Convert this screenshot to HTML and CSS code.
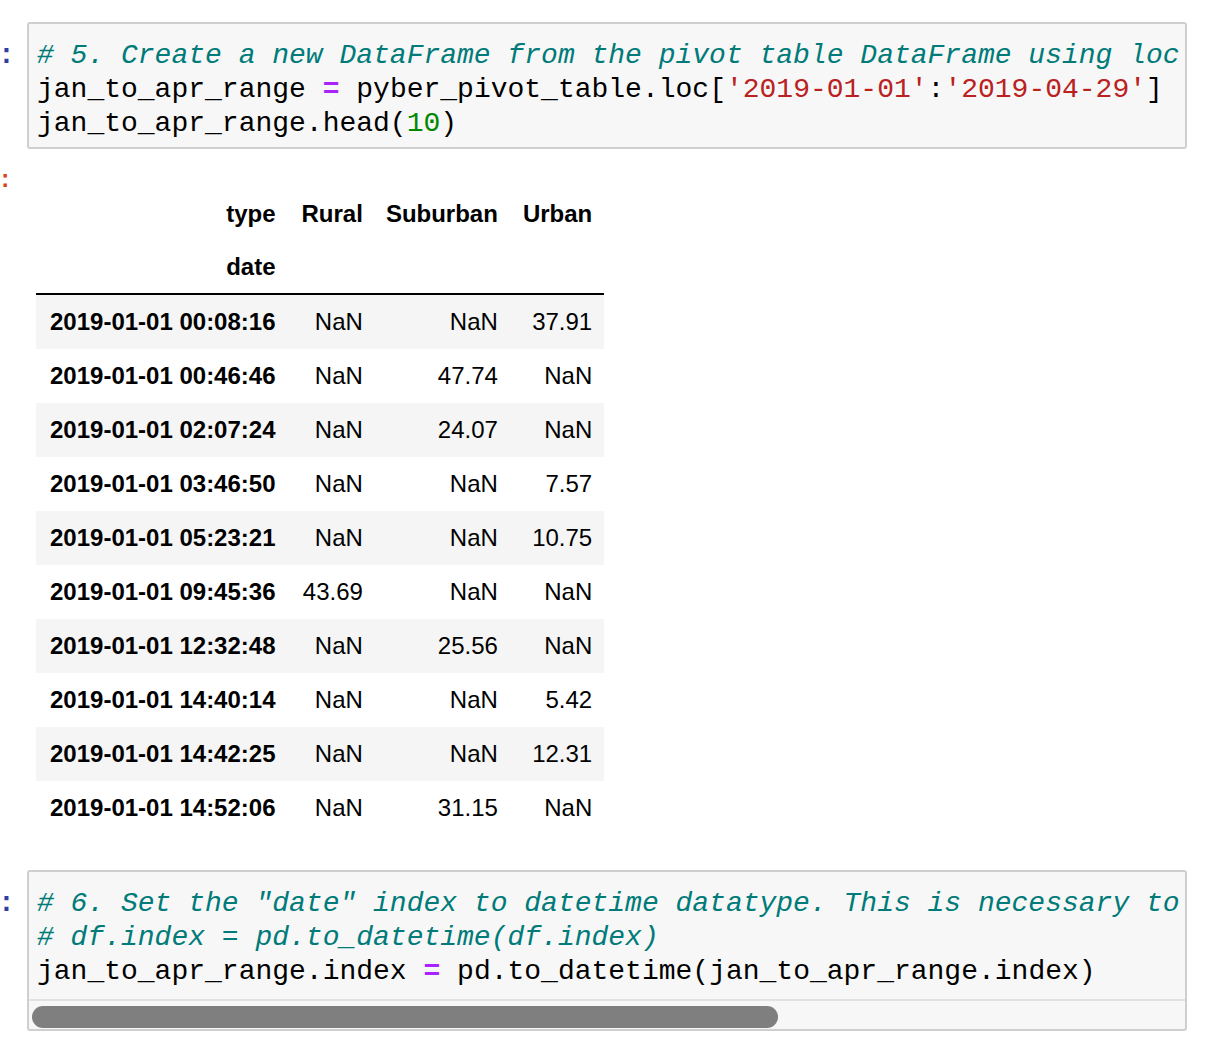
FILE: index.html
```html
<!DOCTYPE html>
<html lang="en">
<head>
<meta charset="utf-8">
<title>Notebook</title>
<link rel="stylesheet" href="styles.css">
</head>
<body>
<div class="nb">
  <div class="cell">
    <div class="prompt prompt-in">:</div>
    <div class="input-area">
<pre class="code"><span class="cm"># 5. Create a new DataFrame from the pivot table DataFrame using loc</span>
jan_to_apr_range <span class="op">=</span> pyber_pivot_table.loc[<span class="str">'2019-01-01'</span>:<span class="str">'2019-04-29'</span>]
jan_to_apr_range.head(<span class="num">10</span>)</pre>
    </div>
  </div>

  <div class="cell cell-out">
    <div class="prompt prompt-out">:</div>
    <div class="output-area">
      <table class="df">
        <thead>
          <tr><th>type</th><th>Rural</th><th>Suburban</th><th>Urban</th></tr>
          <tr class="names"><th>date</th><th></th><th></th><th></th></tr>
        </thead>
        <tbody>
          <tr><th>2019-01-01 00:08:16</th><td>NaN</td><td>NaN</td><td>37.91</td></tr>
          <tr><th>2019-01-01 00:46:46</th><td>NaN</td><td>47.74</td><td>NaN</td></tr>
          <tr><th>2019-01-01 02:07:24</th><td>NaN</td><td>24.07</td><td>NaN</td></tr>
          <tr><th>2019-01-01 03:46:50</th><td>NaN</td><td>NaN</td><td>7.57</td></tr>
          <tr><th>2019-01-01 05:23:21</th><td>NaN</td><td>NaN</td><td>10.75</td></tr>
          <tr><th>2019-01-01 09:45:36</th><td>43.69</td><td>NaN</td><td>NaN</td></tr>
          <tr><th>2019-01-01 12:32:48</th><td>NaN</td><td>25.56</td><td>NaN</td></tr>
          <tr><th>2019-01-01 14:40:14</th><td>NaN</td><td>NaN</td><td>5.42</td></tr>
          <tr><th>2019-01-01 14:42:25</th><td>NaN</td><td>NaN</td><td>12.31</td></tr>
          <tr><th>2019-01-01 14:52:06</th><td>NaN</td><td>31.15</td><td>NaN</td></tr>
        </tbody>
      </table>
    </div>
  </div>

  <div class="cell">
    <div class="prompt prompt-in">:</div>
    <div class="input-area">
<pre class="code code-scroll"><span class="cm"># 6. Set the "date" index to datetime datatype. This is necessary to use the resample() method in Step 8.</span>
<span class="cm"># df.index = pd.to_datetime(df.index)</span>
jan_to_apr_range.index <span class="op">=</span> pd.to_datetime(jan_to_apr_range.index)</pre>
      <div class="hscroll"><div class="thumb"></div></div>
    </div>
  </div>
</div>
</body>
</html>
```

FILE: styles.css
```css
html, body {
  margin: 0;
  background: #ffffff;
}

.nb {
  padding: 22px 27px 0 0;
}

.cell {
  display: flex;
  align-items: flex-start;
}

.prompt {
  flex: 0 0 27px;
  font-family: "Liberation Mono", "DejaVu Sans Mono", monospace;
  font-weight: bold;
  font-size: 28px;
  line-height: 34px;
  text-indent: -2px;
}

.prompt-in {
  color: #303f9f;
  padding-top: 17px;
}

.prompt-out {
  color: #d84315;
  font-size: 24px;
  padding-top: 15px;
}

.input-area {
  flex: 1;
  min-width: 0;
  border: 2px solid #cfcfcf;
  border-radius: 3px;
  background: #f7f7f7;
  overflow: hidden;
}

.code {
  margin: 0;
  padding: 15px 8px 6px 8px;
  font-family: "Liberation Mono", "DejaVu Sans Mono", monospace;
  font-size: 28px;
  line-height: 34px;
  color: #000;
  white-space: pre;
  overflow: hidden;
}

.code-scroll {
  padding-bottom: 10px;
}

.cm {
  color: #007b79;
  font-style: italic;
}

.op {
  color: #aa22ff;
  font-weight: bold;
}

.str {
  color: #ba2121;
}

.num {
  color: #008800;
}

.hscroll {
  border-top: 2px solid #e2e2e2;
  height: 30px;
  padding: 5px 0 0 3px;
  box-sizing: border-box;
}

.thumb {
  width: 746px;
  height: 22px;
  border-radius: 11px;
  background: #7f7f7f;
}

.output-area {
  flex: 1;
  padding: 38px 0 35px 9px;
}

.df {
  border-collapse: separate;
  border-spacing: 0;
  font-family: "Liberation Sans", Arial, sans-serif;
  font-size: 24px;
  color: #000;
}

.df th,
.df td {
  padding: 0 12px 0 14px;
  line-height: 54px;
  text-align: right;
  white-space: nowrap;
  vertical-align: middle;
}

.df th:nth-child(3),
.df td:nth-child(3) {
  padding-left: 11px;
}

.df th:nth-child(4),
.df td:nth-child(4) {
  padding-left: 13px;
}

.df th {
  font-weight: bold;
}

.df td {
  font-weight: normal;
}

.df thead tr.names th {
  border-bottom: 2px solid #000;
  line-height: 52px;
}

.df tbody tr:nth-child(odd) {
  background: #f5f5f5;
}
```
